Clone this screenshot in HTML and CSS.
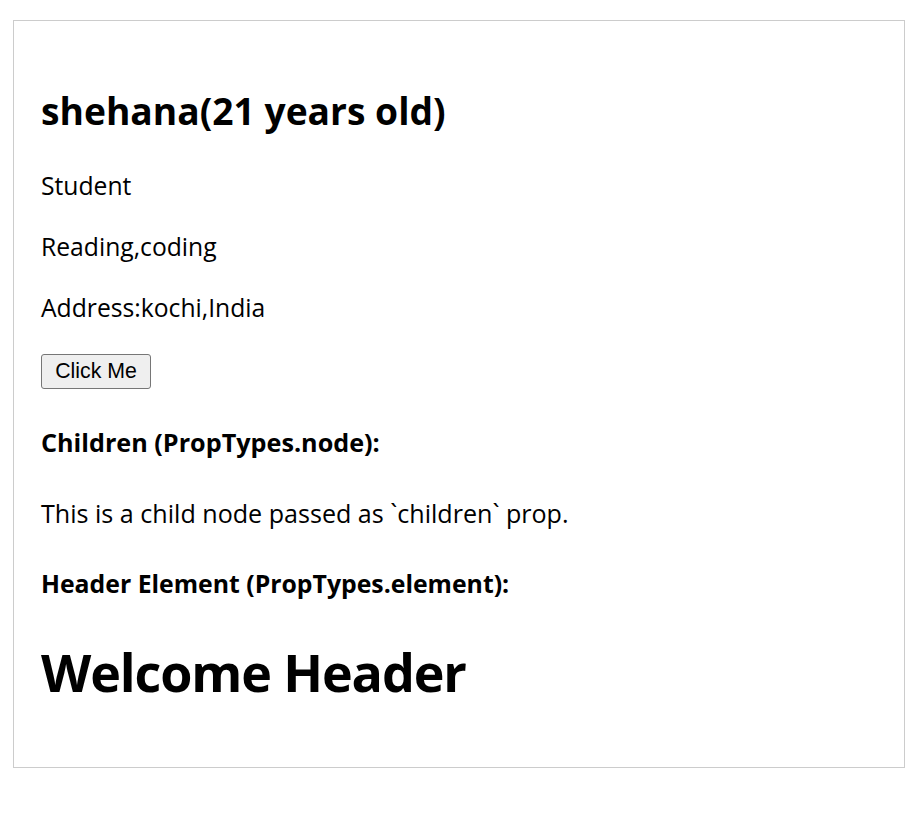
FILE: index.html
```html
<!DOCTYPE html>
<html lang="en">
<head>
<meta charset="utf-8">
<title>Profile</title>
<link rel="stylesheet" href="styles.css">
</head>
<body>
<div class="card">
  <h2 class="name">shehana(21 years old)</h2>
  <p class="line first">Student</p>
  <p class="line">Reading,coding</p>
  <p class="line">Address:kochi,India</p>
  <button class="btn" type="button">Click Me</button>
  <h4 class="label label-children">Children (PropTypes.node):</h4>
  <p class="line child">This is a child node passed as `children` prop.</p>
  <h4 class="label label-header">Header Element (PropTypes.element):</h4>
  <h1 class="welcome">Welcome Header</h1>
</div>
</body>
</html>
```

FILE: styles.css
```css
html, body {
  margin: 0;
  padding: 0;
  background: #fff;
}

body {
  font-family: "Open Sans", "Noto Sans", sans-serif;
  color: #000;
}

.card {
  margin: 20px 11px 0 13px;
  border: 1px solid #cccccc;
  padding: 66px 27px 1px 27px;
  box-sizing: border-box;
  height: 748px;
}

.name {
  margin: 0 0 35px 0;
  font-size: 37.2px;
  line-height: 48px;
  font-weight: 700;
}

.line {
  margin: 0 0 29px 0;
  font-size: 24.7px;
  line-height: 32px;
}

.btn {
  display: block;
  margin: 30px 0 0 0;
  width: 110px;
  height: 35px;
  padding: 0;
  font-family: "Liberation Sans", Arial, sans-serif;
  font-size: 21.3px;
  color: #000;
  background: #efefef;
  border: 1px solid #767676;
  border-radius: 3px;
}

.label {
  margin: 37px 0 0 0;
  font-size: 24.8px;
  line-height: 32px;
  font-weight: 700;
}

.label-children {
  font-size: 25.2px;
}

.child {
  margin: 39px 0 38px 0;
  font-size: 25.1px;
}

.label-header {
  margin-top: 0;
}

.welcome {
  margin: 41px 0 0 0;
  font-size: 52px;
  line-height: 64px;
  font-weight: 700;
  letter-spacing: -1.1px;
}
```
